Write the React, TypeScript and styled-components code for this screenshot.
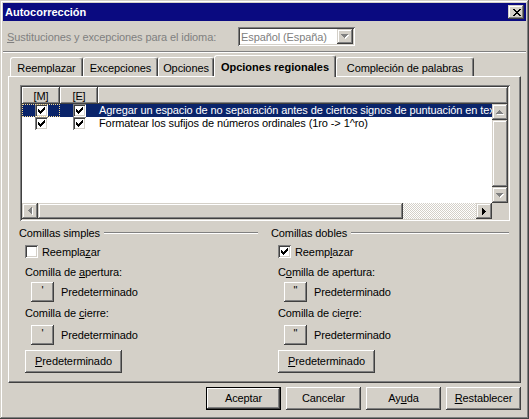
import React from "react"
import styled, { createGlobalStyle, css } from "styled-components"

const face = "#d4d0c8"

const GlobalStyle = createGlobalStyle`
  html, body {
    margin: 0;
    padding: 0;
    background: ${face};
  }
  body {
    font-family: "Liberation Sans", Arial, sans-serif;
    font-size: 11px;
    letter-spacing: -0.1px;
    color: #000;
  }
  * {
    box-sizing: border-box;
  }
`

// classic 3D bevels
const raisedButton = css`
  background: ${face};
  box-shadow: inset -1px -1px #404040, inset 1px 1px #ffffff,
    inset -2px -2px #808080, inset 2px 2px ${face};
`

const raisedControl = css`
  background: ${face};
  box-shadow: inset -1px -1px #404040, inset 1px 1px ${face},
    inset -2px -2px #808080, inset 2px 2px #ffffff;
`

const sunken = css`
  box-shadow: inset 1px 1px #808080, inset -1px -1px #ffffff,
    inset 2px 2px #404040, inset -2px -2px ${face};
`

const s = {
  Window: styled.div`
    width: 529px;
    height: 419px;
    padding: 3px;
    display: flex;
    flex-direction: column;
    ${raisedControl}
  `,

  TitleBar: styled.div`
    height: 18px;
    background: #0a0a80;
    color: #fff;
    font-weight: bold;
    letter-spacing: 0;
    display: flex;
    align-items: center;
    justify-content: space-between;
    padding: 0 2px;
  `,

  CloseButton: styled.div`
    width: 16px;
    height: 14px;
    display: flex;
    align-items: center;
    justify-content: center;
    padding-left: 1px;
    ${raisedControl}
  `,

  LangRow: styled.div`
    display: flex;
    align-items: center;
    margin-top: 6px;
    padding-left: 4px;
    height: 19px;
  `,

  DisabledLabel: styled.span`
    width: 231px;
    color: #808080;
  `,

  Combo: styled.div`
    width: 117px;
    height: 19px;
    padding: 2px;
    background: #fff;
    display: flex;
    align-items: center;
    ${sunken}
  `,

  ComboText: styled.span`
    flex: 1;
    color: #808080;
    padding-left: 1px;
  `,

  ScrollButton: styled.div<{ $w?: number; $h?: number }>`
    width: ${p => p.$w ?? 16}px;
    height: ${p => p.$h ?? 16}px;
    flex-shrink: 0;
    display: flex;
    align-items: center;
    justify-content: center;
    ${raisedControl}
  `,

  Separator: styled.div`
    margin-top: 5px;
    height: 2px;
    border-top: 1px solid #808080;
    border-bottom: 1px solid #fff;
  `,

  TabRow: styled.div`
    display: flex;
    align-items: flex-end;
    height: 21px;
    margin: 2px 0 0 7px;
    position: relative;
    z-index: 1;
  `,

  Tab: styled.div<{ $w: number; $active?: boolean }>`
    width: ${p => p.$w}px;
    height: ${p => (p.$active ? 22 : 19)}px;
    margin-bottom: ${p => (p.$active ? -1 : 0)}px;
    background: ${face};
    border-top: 1px solid #fff;
    border-left: 1px solid #fff;
    border-right: 1px solid #404040;
    border-radius: 3px 3px 0 0;
    box-shadow: inset -1px 0 #808080;
    display: flex;
    align-items: center;
    justify-content: center;
    padding-top: ${p => (p.$active ? 0 : 1)}px;
    font-weight: ${p => (p.$active ? "bold" : "normal")};
    letter-spacing: ${p => (p.$active ? "0" : "-0.1px")};
    white-space: nowrap;
  `,

  Panel: styled.div`
    margin: 0 5px;
    height: 307px;
    border: 1px solid;
    border-color: #fff #404040 #404040 #fff;
    box-shadow: inset -1px -1px #808080;
    padding: 8px 11px 0 10px;
  `,

  ListView: styled.div`
    margin-left: 1px;
    width: 490px;
    height: 136px;
    padding: 2px;
    background: #fff;
    display: grid;
    grid-template-columns: 1fr 16px;
    grid-template-rows: 17px 1fr 16px;
    ${sunken}
  `,

  Header: styled.div`
    grid-column: 1 / 3;
    display: grid;
    grid-template-columns: 38px 38px 1fr;
  `,

  HeaderCell: styled.div`
    display: flex;
    align-items: center;
    justify-content: center;
    ${raisedButton}
  `,

  Rows: styled.div`
    overflow: hidden;
  `,

  Row: styled.div<{ $selected?: boolean }>`
    height: 13px;
    display: grid;
    grid-template-columns: 38px 38px 1fr;
    background: ${p => (p.$selected ? "#0a246a" : "#fff")};
    color: ${p => (p.$selected ? "#fff" : "#000")};
  `,

  CheckCell: styled.div<{ $focus?: boolean }>`
    display: flex;
    align-items: center;
    justify-content: center;
    padding-left: 1px;
    outline: ${p => (p.$focus ? "1px dotted #f5db95" : "none")};
    outline-offset: -1px;
  `,

  TextCell: styled.div`
    padding-left: 1px;
    white-space: nowrap;
    overflow: hidden;
    line-height: 13px;
  `,

  VScroll: styled.div`
    display: flex;
    flex-direction: column;
  `,

  HScroll: styled.div`
    display: flex;
  `,

  Thumb: styled.div<{ $w?: number }>`
    ${p => (p.$w ? `width: ${p.$w}px;` : "flex: 1;")}
    ${raisedControl}
  `,

  Track: styled.div`
    flex: 1;
    background-image: conic-gradient(#fff 25%, ${face} 0 50%, #fff 0 75%, ${face} 0);
    background-size: 2px 2px;
  `,

  Corner: styled.div`
    background: ${face};
  `,

  Groups: styled.div`
    display: grid;
    grid-template-columns: 252px 1fr;
    margin-top: 5px;
  `,

  Group: styled.div<{ $right: number }>`
    display: flex;
    flex-direction: column;
    padding-right: ${p => p.$right}px;
  `,

  GroupHeader: styled.div`
    height: 13px;
    display: flex;
    align-items: center;
    white-space: nowrap;
  `,

  GroupLine: styled.div`
    flex: 1;
    height: 2px;
    margin-left: 4px;
    border-top: 1px solid #808080;
    border-bottom: 1px solid #fff;
  `,

  GroupBody: styled.div<{ $indent: number }>`
    display: flex;
    flex-direction: column;
    align-items: flex-start;
    padding-left: ${p => p.$indent}px;
  `,

  CheckRow: styled.div`
    margin-top: 6px;
    height: 13px;
    display: flex;
    align-items: center;
    gap: 4px;
  `,

  CheckBox: styled.div`
    width: 13px;
    height: 13px;
    background: #fff;
    padding: 3px 0 0 3px;
    flex-shrink: 0;
    ${sunken}
  `,

  FieldLabel: styled.div<{ $top: number }>`
    margin-top: ${p => p.$top}px;
    line-height: 12px;
  `,

  QuoteRow: styled.div<{ $top: number }>`
    margin-top: ${p => p.$top}px;
    padding-left: 6px;
    display: flex;
    align-items: center;
    gap: 7px;
  `,

  Button: styled.button<{ $w: number; $h: number; $default?: boolean }>`
    width: ${p => p.$w}px;
    height: ${p => p.$h}px;
    flex-shrink: 0;
    border: none;
    margin: 0;
    padding: 0 0 1px;
    font: inherit;
    letter-spacing: inherit;
    color: #000;
    ${raisedButton}
    ${p =>
      p.$default &&
      css`
        box-shadow: inset 0 0 0 1px #000, inset -2px -2px #404040,
          inset 2px 2px #ffffff, inset -3px -3px #808080;
      `}
  `,

  QuoteGlyph: styled.span`
    display: block;
    margin-top: -3px;
  `,

  Footer: styled.div`
    display: flex;
    justify-content: flex-end;
    gap: 5px;
    margin-top: 4px;
    padding-right: 5px;
  `,

  U: styled.span`
    text-decoration: underline;
    text-underline-offset: 1px;
  `,
}

// tiny pixel glyphs, drawn like the classic bitmaps
function Pixels({ rows, color, shadow }: { rows: string[]; color: string; shadow?: string }) {
  const w = rows[0].length + (shadow ? 1 : 0)
  const h = rows.length + (shadow ? 1 : 0)
  const cells: React.ReactElement[] = []
  const draw = (dx: number, fill: string, key: string) => {
    rows.forEach((row, y) =>
      row.split("").forEach((c, x) => {
        if (c === "X") cells.push(<rect key={`${key}${x}-${y}`} x={x + dx} y={y + dx} width={1} height={1} fill={fill} />)
      })
    )
  }
  if (shadow) draw(1, shadow, "s")
  draw(0, color, "c")
  return (
    <svg width={w} height={h} shapeRendering="crispEdges" style={{ display: "block" }}>
      {cells}
    </svg>
  )
}

const closeX = ["XX....XX", ".XX..XX.", "..XXXX..", "...XX...", "..XXXX..", ".XX..XX.", "XX....XX"]
const check = ["......X", ".....XX", "X...XXX", "XX.XXX.", "XXXXX..", ".XXX...", "..X...."]
const upArrow = ["...X...", "..XXX..", ".XXXXX.", "XXXXXXX"]
const downArrow = ["XXXXXXX", ".XXXXX.", "..XXX..", "...X..."]
const leftArrow = ["...X", "..XX", ".XXX", "XXXX", ".XXX", "..XX", "...X"]
const rightArrow = ["X...", "XX..", "XXX.", "XXXX", "XXX.", "XX..", "X..."]

function Check({ on }: { on?: boolean }) {
  return <s.CheckBox>{on && <Pixels rows={check} color="#000" />}</s.CheckBox>
}

function QuoteGroup({ title, right, indent, checked, quote, labels }: {
  title: string
  right: number
  indent: number
  checked?: boolean
  quote: string
  labels: React.ReactNode[]
}) {
  return (
    <s.Group $right={right}>
      <s.GroupHeader>
        {title}
        <s.GroupLine />
      </s.GroupHeader>
      <s.GroupBody $indent={indent}>
        <s.CheckRow>
          <Check on={checked} />
          {labels[0]}
        </s.CheckRow>
        <s.FieldLabel $top={8}>{labels[1]}</s.FieldLabel>
        <s.QuoteRow $top={4}>
          <s.Button $w={23} $h={20}><s.QuoteGlyph>{quote}</s.QuoteGlyph></s.Button>
          Predeterminado
        </s.QuoteRow>
        <s.FieldLabel $top={5}>{labels[2]}</s.FieldLabel>
        <s.QuoteRow $top={6}>
          <s.Button $w={23} $h={20}><s.QuoteGlyph>{quote}</s.QuoteGlyph></s.Button>
          Predeterminado
        </s.QuoteRow>
        <s.Button $w={97} $h={23} style={{ marginTop: 5 }}>
          <s.U>P</s.U>redeterminado
        </s.Button>
      </s.GroupBody>
    </s.Group>
  )
}

export default function App() {
  const tabs = [
    { label: "Reemplazar", w: 73 },
    { label: "Excepciones", w: 75 },
    { label: "Opciones", w: 56 },
    { label: "Opciones regionales", w: 122, active: true },
    { label: "Compleción de palabras", w: 138 },
  ]

  return (
    <>
      <GlobalStyle />
      <s.Window>
        <s.TitleBar>
          Autocorrección
          <s.CloseButton>
            <Pixels rows={closeX} color="#000" />
          </s.CloseButton>
        </s.TitleBar>

        <s.LangRow>
          <s.DisabledLabel>
            <s.U>S</s.U>ustituciones y excepciones para el idioma:
          </s.DisabledLabel>
          <s.Combo>
            <s.ComboText>Español (España)</s.ComboText>
            <s.ScrollButton $w={16} $h={15}>
              <Pixels rows={downArrow} color="#808080" shadow="#fff" />
            </s.ScrollButton>
          </s.Combo>
        </s.LangRow>

        <s.Separator />

        <s.TabRow>
          {tabs.map(t => (
            <s.Tab key={t.label} $w={t.w} $active={t.active}>{t.label}</s.Tab>
          ))}
        </s.TabRow>

        <s.Panel>
          <s.ListView>
            <s.Header>
              <s.HeaderCell>[M]</s.HeaderCell>
              <s.HeaderCell>[E]</s.HeaderCell>
              <s.HeaderCell />
            </s.Header>
            <s.Rows>
              <s.Row $selected>
                <s.CheckCell $focus><Check on /></s.CheckCell>
                <s.CheckCell><Check on /></s.CheckCell>
                <s.TextCell>Agregar un espacio de no separación antes de ciertos signos de puntuación en texto</s.TextCell>
              </s.Row>
              <s.Row>
                <s.CheckCell><Check on /></s.CheckCell>
                <s.CheckCell><Check on /></s.CheckCell>
                <s.TextCell>Formatear los sufijos de números ordinales (1ro -&gt; 1^ro)</s.TextCell>
              </s.Row>
            </s.Rows>
            <s.VScroll>
              <s.ScrollButton>
                <Pixels rows={upArrow} color="#808080" shadow="#fff" />
              </s.ScrollButton>
              <s.Thumb />
              <s.ScrollButton>
                <Pixels rows={downArrow} color="#808080" shadow="#fff" />
              </s.ScrollButton>
            </s.VScroll>
            <s.HScroll>
              <s.ScrollButton>
                <Pixels rows={leftArrow} color="#808080" shadow="#fff" />
              </s.ScrollButton>
              <s.Thumb $w={365} />
              <s.Track />
              <s.ScrollButton>
                <Pixels rows={rightArrow} color="#000" />
              </s.ScrollButton>
            </s.HScroll>
            <s.Corner />
          </s.ListView>

          <s.Groups>
            <QuoteGroup
              title="Comillas simples"
              right={13}
              indent={6}
              quote="'"
              labels={[
                <span>Reempla<s.U>z</s.U>ar</span>,
                <span>Comilla de <s.U>a</s.U>pertura:</span>,
                <span>Comilla de <s.U>c</s.U>ierre:</span>,
              ]}
            />
            <QuoteGroup
              title="Comillas dobles"
              right={0}
              indent={7}
              checked
              quote={'"'}
              labels={[
                <span>Reemp<s.U>l</s.U>azar</span>,
                <span>C<s.U>o</s.U>milla de apertura:</span>,
                <span>Comilla de cie<s.U>r</s.U>re:</span>,
              ]}
            />
          </s.Groups>
        </s.Panel>

        <s.Footer>
          <s.Button $w={75} $h={23} $default>Aceptar</s.Button>
          <s.Button $w={75} $h={23}>Cancelar</s.Button>
          <s.Button $w={75} $h={23}>Ay<s.U>u</s.U>da</s.Button>
          <s.Button $w={75} $h={23}><s.U>R</s.U>establecer</s.Button>
        </s.Footer>
      </s.Window>
    </>
  )
}
